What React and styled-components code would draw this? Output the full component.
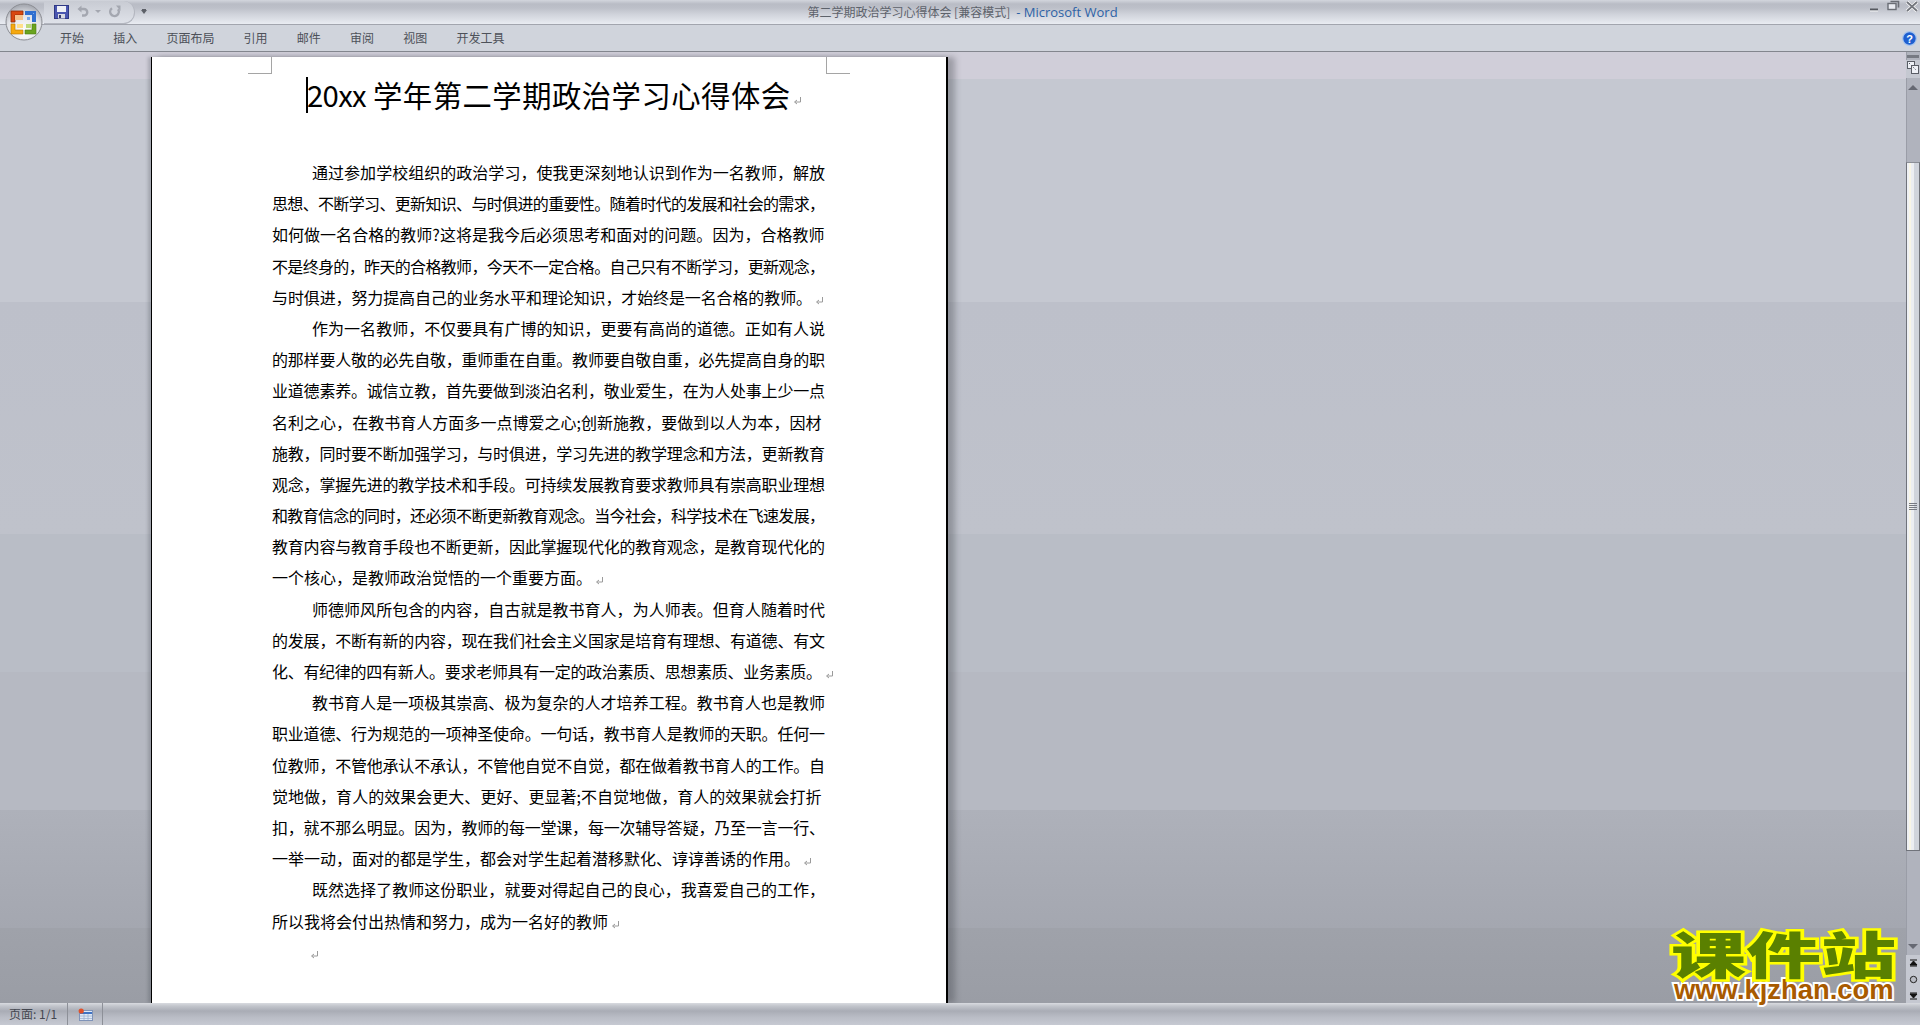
import React from "react";
import styled, { createGlobalStyle } from "styled-components";

const TABS = ["开始", "插入", "页面布局", "引用", "邮件", "审阅", "视图", "开发工具"];

// w is the width the line is squeezed or stretched to in the page, no w means natural width
const PARAGRAPHS = [
  [
    { t: "通过参加学校组织的政治学习，使我更深刻地认识到作为一名教师，解放", w: 513 },
    { t: "思想、不断学习、更新知识、与时俱进的重要性。随着时代的发展和社会的需求，", w: 553 },
    { t: "如何做一名合格的教师?这将是我今后必须思考和面对的问题。因为，合格教师", w: 553 },
    { t: "不是终身的，昨天的合格教师，今天不一定合格。自己只有不断学习，更新观念，", w: 553 },
    { t: "与时俱进，努力提高自己的业务水平和理论知识，才始终是一名合格的教师。", w: 540, end: true },
  ],
  [
    { t: "作为一名教师，不仅要具有广博的知识，更要有高尚的道德。正如有人说", w: 513 },
    { t: "的那样要人敬的必先自敬，重师重在自重。教师要自敬自重，必先提高自身的职", w: 553 },
    { t: "业道德素养。诚信立教，首先要做到淡泊名利，敬业爱生，在为人处事上少一点", w: 553 },
    { t: "名利之心，在教书育人方面多一点博爱之心;创新施教，要做到以人为本，因材", w: 553 },
    { t: "施教，同时要不断加强学习，与时俱进，学习先进的教学理念和方法，更新教育", w: 553 },
    { t: "观念，掌握先进的教学技术和手段。可持续发展教育要求教师具有崇高职业理想", w: 553 },
    { t: "和教育信念的同时，还必须不断更新教育观念。当今社会，科学技术在飞速发展，", w: 553 },
    { t: "教育内容与教育手段也不断更新，因此掌握现代化的教育观念，是教育现代化的", w: 553 },
    { t: "一个核心，是教师政治觉悟的一个重要方面。", end: true },
  ],
  [
    { t: "师德师风所包含的内容，自古就是教书育人，为人师表。但育人随着时代", w: 513 },
    { t: "的发展，不断有新的内容，现在我们社会主义国家是培育有理想、有道德、有文", w: 553 },
    { t: "化、有纪律的四有新人。要求老师具有一定的政治素质、思想素质、业务素质。", w: 550, end: true },
  ],
  [
    { t: "教书育人是一项极其崇高、极为复杂的人才培养工程。教书育人也是教师", w: 513 },
    { t: "职业道德、行为规范的一项神圣使命。一句话，教书育人是教师的天职。任何一", w: 553 },
    { t: "位教师，不管他承认不承认，不管他自觉不自觉，都在做着教书育人的工作。自", w: 553 },
    { t: "觉地做，育人的效果会更大、更好、更显著;不自觉地做，育人的效果就会打折", w: 553 },
    { t: "扣，就不那么明显。因为，教师的每一堂课，每一次辅导答疑，乃至一言一行、", w: 553 },
    { t: "一举一动，面对的都是学生，都会对学生起着潜移默化、谆谆善诱的作用。", end: true },
  ],
  [
    { t: "既然选择了教师这份职业，就要对得起自己的良心，我喜爱自己的工作，", w: 513 },
    { t: "所以我将会付出热情和努力，成为一名好的教师", end: true },
  ],
];

function spacing(line) {
  if (!line.w) return 0;
  const chars = [...line.t];
  const units = chars.reduce((sum, c) => sum + (c.charCodeAt(0) < 128 ? 0.5 : 1), 0);
  return (line.w - units * 16) / (chars.length - 1);
}

function ParaMark() {
  return (
    <MarkSvg viewBox="0 0 9 9" width="9" height="9">
      <path d="M7.5 1v5H2M4 4 1.5 6 4 8" fill="none" stroke="#9a9a9a" strokeWidth="1" />
    </MarkSvg>
  );
}

function OfficeOrb() {
  return (
    <OrbBox>
      <svg viewBox="0 0 38 38" width="38" height="38">
        <defs>
          <radialGradient id="orbFill" cx="50%" cy="75%" r="70%">
            <stop offset="0" stopColor="#ffffff" />
            <stop offset="0.7" stopColor="#dfe1e6" />
            <stop offset="1" stopColor="#a9acb4" />
          </radialGradient>
        </defs>
        <circle cx="19" cy="19" r="18" fill="url(#orbFill)" stroke="#8b8d93" />
        <path d="M6 19V8h12v4h-8v7z" fill="#d9480f" stroke="#8f2c05" strokeWidth="0.8" />
        <path d="M10 12h8v5h-8z" fill="#f6c28a" />
        <path d="M20 8h11v11h-4v-7h-7z" fill="#2f6fd0" />
        <path d="M22 14h3v3h-3zM28 10h1v1h-1z" fill="#77a8ec" />
        <path d="M6 21h4v6h8v4H6z" fill="#f6a90f" stroke="#b97a05" strokeWidth="0.6" />
        <path d="M12 21h6v4h-6z" fill="#ffe08a" />
        <path d="M20 27h7v-6h4v10H20z" fill="#6aa41f" stroke="#4b7a12" strokeWidth="0.6" />
        <path d="M21 21h5v4h-5z" fill="#bcd97a" />
      </svg>
    </OrbBox>
  );
}

function SaveIcon() {
  return (
    <svg viewBox="0 0 15 14" width="15" height="14">
      <rect x="0.5" y="0.5" width="14" height="13" fill="#4a56b0" stroke="#2f3884" />
      <rect x="3" y="1" width="9" height="6" fill="#eef0f6" />
      <rect x="4" y="9" width="7" height="4.5" fill="#d8dae2" />
      <rect x="5" y="10" width="2" height="3" fill="#333a70" />
    </svg>
  );
}

function UndoIcon() {
  return (
    <svg viewBox="0 0 12 13" width="12" height="13">
      <path d="M2 4h5a3.2 3.2 0 0 1 0 6.5H5" fill="none" stroke="#a4a7b0" strokeWidth="2.4" />
      <path d="M4.5 0.5v7L0.5 4z" fill="#a4a7b0" />
    </svg>
  );
}

function RedoIcon() {
  return (
    <svg viewBox="0 0 12 13" width="12" height="13">
      <path d="M3 3.2a4.3 4.3 0 1 0 6 1" fill="none" stroke="#a4a7b0" strokeWidth="2.4" />
      <path d="M7 0.5h4.5V6z" fill="#a4a7b0" />
    </svg>
  );
}

function WindowButtons() {
  return (
    <WindowRow>
      <svg viewBox="0 0 14 14" width="14" height="14">
        <path d="M1 9.5h8" stroke="#55585f" strokeWidth="2" />
        <path d="M1 11h8" stroke="#fff" strokeWidth="0.8" />
      </svg>
      <svg viewBox="0 0 14 14" width="14" height="14">
        <path d="M3.5 1.5h8v6" fill="none" stroke="#6a6d75" strokeWidth="1.6" />
        <rect x="1" y="3.5" width="8" height="6" fill="#e8eaf0" stroke="#6a6d75" strokeWidth="1.4" />
      </svg>
      <svg viewBox="0 0 14 14" width="14" height="14">
        <path d="M2 2l10 9M12 2 2 11" stroke="#fff" strokeWidth="3.2" />
        <path d="M2 2l10 9M12 2 2 11" stroke="#73767d" strokeWidth="1.8" />
      </svg>
    </WindowRow>
  );
}

function HelpIcon() {
  return (
    <svg viewBox="0 0 15 15" width="15" height="15">
      <circle cx="7.5" cy="7.5" r="6.8" fill="#1f5fd0" stroke="#a6c4ee" strokeWidth="1.2" />
      <HelpMark x="7.5" y="11.5" textAnchor="middle">?</HelpMark>
    </svg>
  );
}

function SplitIcon() {
  return (
    <svg viewBox="0 0 12 13" width="12" height="13">
      <rect x="0.5" y="0.5" width="7" height="7" fill="#eef0f6" stroke="#5a5d66" />
      <rect x="4.5" y="4.5" width="7" height="8" fill="#eef0f6" stroke="#5a5d66" />
      <path d="M2 2l7 7" stroke="#5a5d66" strokeDasharray="1.5 1.5" />
    </svg>
  );
}

function TableIcon() {
  return (
    <svg viewBox="0 0 15 13" width="15" height="13">
      <rect x="1.5" y="2.5" width="13" height="10" fill="#dfe9f7" stroke="#7f93b8" />
      <path d="M2 5h12" stroke="#3f73c4" strokeWidth="2" />
      <path d="M2 8h12M2 10.5h12M6 6v6M10 6v6" stroke="#9fb2d0" strokeWidth="0.8" />
      <circle cx="3.2" cy="3" r="2.6" fill="#e0502a" />
    </svg>
  );
}

function App() {
  return (
    <Shell>
      <GlobalStyle />
      <OfficeOrb />
      <TitleBar>
        <QuickGroup>
          <QuickAccess>
            <SaveIcon />
            <UndoIcon />
            <QuickCaret />
            <RedoIcon />
          </QuickAccess>
          <QuickMore />
        </QuickGroup>
        <DocTitle>
          第二学期政治学习心得体会 [兼容模式]
          <AppName>- Microsoft Word</AppName>
        </DocTitle>
        <WindowButtons />
      </TitleBar>
      <TabBar>
        <TabRow>
          {TABS.map((tab) => (
            <Tab key={tab}>{tab}</Tab>
          ))}
        </TabRow>
        <HelpIcon />
      </TabBar>
      <Workspace>
        <Canvas>
          <Page>
            <CropMark $side="left" />
            <CropMark $side="right" />
            <DocHeading>
              <Caret />
              <HeadingLatin>20xx</HeadingLatin>
              <HeadingText>学年第二学期政治学习心得体会</HeadingText>
              <ParaMark />
            </DocHeading>
            {PARAGRAPHS.map((lines, i) => (
              <Paragraph key={i}>
                {lines.map((line, j) => (
                  <Line key={j} $first={j === 0} $spacing={spacing(line)}>
                    {line.t}
                    {line.end && <ParaMark />}
                  </Line>
                ))}
              </Paragraph>
            ))}
            <EmptyLine $first $spacing={0}>
              <ParaMark />
            </EmptyLine>
          </Page>
        </Canvas>
        <Scrollbar>
          <SplitBar />
          <SplitButton>
            <SplitIcon />
          </SplitButton>
          <ArrowButton>
            <ArrowUp />
          </ArrowButton>
          <Thumb>
            <ThumbGrip />
          </Thumb>
          <Track />
          <ArrowButton>
            <ArrowDown />
          </ArrowButton>
          <BrowseGroup>
            <BrowseGlyph>
              <svg viewBox="0 0 9 9" width="9" height="9">
                <path d="M1 1h7M4.5 2 8 6H1zM1 7h7" stroke="#111" fill="#111" />
              </svg>
            </BrowseGlyph>
            <BrowseGlyph>
              <svg viewBox="0 0 9 9" width="9" height="9">
                <circle cx="4.5" cy="4.5" r="3.2" fill="#b9bcc5" stroke="#222" />
              </svg>
            </BrowseGlyph>
            <BrowseGlyph>
              <svg viewBox="0 0 9 9" width="9" height="9">
                <path d="M1 2h7M4.5 7 8 3H1zM1 8h7" stroke="#111" fill="#111" />
              </svg>
            </BrowseGlyph>
          </BrowseGroup>
        </Scrollbar>
      </Workspace>
      <StatusBar>
        <PageCount>页面: 1/1</PageCount>
        <StatusIcon>
          <TableIcon />
        </StatusIcon>
      </StatusBar>
      <Watermark>
        <WatermarkName>课件站</WatermarkName>
        <WatermarkUrl>www.kjzhan.com</WatermarkUrl>
      </Watermark>
    </Shell>
  );
}

export default App;

const GlobalStyle = createGlobalStyle`
  html, body {
    margin: 0;
    height: 100%;
    overflow: hidden;
    background: #c5c8d1;
  }
  #root {
    height: 100%;
  }
`;

const Shell = styled.div`
  position: relative;
  display: flex;
  flex-direction: column;
  height: 1025px;
  overflow: hidden;
  font-family: "Noto Sans CJK SC", "Liberation Sans", sans-serif;
`;

const OrbBox = styled.div`
  position: absolute;
  left: 5px;
  top: 3px;
  width: 38px;
  height: 38px;
  z-index: 3;
`;

const TitleBar = styled.div`
  display: grid;
  grid-template-columns: 1fr auto 1fr;
  align-items: center;
  height: 25px;
  box-sizing: border-box;
  border-bottom: 1px solid #a2a5ae;
  background: linear-gradient(#d3d6dd 0, #b9bcc5 4px, #bdc0c9 8px, #cfd2da 14px, #e9ecf2 24px);
`;

const QuickGroup = styled.div`
  display: flex;
  align-items: center;
  height: 24px;
`;

const QuickAccess = styled.div`
  display: flex;
  align-items: center;
  gap: 8px;
  width: 91px;
  height: 23px;
  box-sizing: border-box;
  margin-left: 44px;
  padding-left: 10px;
  border: 1px solid #b3b6bf;
  border-width: 0 1px 1px 0;
  border-radius: 0 12px 12px 0;
  background: linear-gradient(#c8cbd3, #dfe2e9);
`;

const QuickCaret = styled.div`
  width: 0;
  height: 0;
  margin: 0 0 0 -2px;
  border: 3px solid transparent;
  border-top: 3px solid #a4a7b0;
  border-bottom: 0;
`;

const QuickMore = styled.div`
  width: 0;
  height: 0;
  margin-left: 6px;
  border: 3px solid transparent;
  border-top: 4px solid #5d6068;
  border-bottom: 0;
  box-shadow: 0 -2px 0 -1px #5d6068;
`;

const DocTitle = styled.div`
  padding-left: 5px;
  font-size: 12px;
  line-height: 24px;
  color: #5d626b;
  white-space: nowrap;
`;

const AppName = styled.span`
  margin-left: 6px;
  font-family: "Open Sans", "Liberation Sans", sans-serif;
  font-size: 13px;
  color: #2d62a6;
`;

const WindowRow = styled.div`
  display: flex;
  justify-content: flex-end;
  align-items: flex-start;
  gap: 4px;
  height: 24px;
  padding-right: 1px;
`;

const TabBar = styled.div`
  display: flex;
  align-items: center;
  justify-content: space-between;
  height: 27px;
  box-sizing: border-box;
  padding: 0 3px 0 60px;
  border-bottom: 1px solid #83868e;
  background: #d0d4dc;
`;

const TabRow = styled.div`
  display: flex;
  gap: 29.2px;
`;

const Tab = styled.div`
  font-size: 12px;
  line-height: 26px;
  color: #4d5159;
`;

const HelpMark = styled.text`
  font-family: "Liberation Sans", sans-serif;
  font-size: 11px;
  font-weight: 700;
  fill: #fff;
`;

const Workspace = styled.div`
  display: flex;
  flex: 1;
  min-height: 0;
`;

const Canvas = styled.div`
  display: flex;
  flex: 1;
  box-sizing: border-box;
  padding: 5px 0 0 151px;
  overflow: hidden;
  background: linear-gradient(
    #d0ced9 0 27px,
    #c5c8d1 27px 250px,
    #bdc0ca 250px,
    #bfc2cb 482px,
    #b9bdc6 482px 620px,
    #b6b9c2 620px 758px,
    #aeb1ba 758px,
    #a4a7b0 876px,
    #9fa2aa 876px,
    #9a9da5 951px
  );
`;

const Page = styled.div`
  position: relative;
  width: 797px;
  box-sizing: border-box;
  border-left: 1px solid #000;
  border-right: 2px solid #000;
  background: #fff;
  color: #000;
  box-shadow: 7px 0 6px rgba(60, 62, 70, 0.35), -3px 0 3px rgba(60, 62, 70, 0.25);
`;

const CropMark = styled.div`
  position: absolute;
  top: 0;
  left: ${(p) => (p.$side === "left" ? "96px" : "674px")};
  width: 23px;
  height: 16px;
  border-bottom: 1px solid #a5a5a5;
  border-${(p) => (p.$side === "left" ? "right" : "left")}: 1px solid #a5a5a5;
`;

const DocHeading = styled.div`
  display: flex;
  align-items: center;
  height: 36px;
  box-sizing: border-box;
  margin: 20px 0 44px;
  padding: 0 0 3px 154px;
  font-size: 29.33px;
  white-space: nowrap;

  svg {
    margin: 14px 0 0 2px;
  }
`;

const Caret = styled.span`
  align-self: flex-start;
  width: 2px;
  height: 36px;
  margin-right: -1px;
  background: #000;
`;

const HeadingLatin = styled.span`
  width: 66px;
  flex: none;
  letter-spacing: -0.7px;
`;

const HeadingText = styled.span`
  letter-spacing: 0.5px;
`;

const Paragraph = styled.div``;

const Line = styled.div`
  height: 31.2px;
  padding-left: ${(p) => (p.$first ? "160px" : "120px")};
  font-size: 16px;
  line-height: 31.2px;
  letter-spacing: ${(p) => p.$spacing.toFixed(3)}px;
  white-space: nowrap;
`;

const EmptyLine = styled(Line)`
  margin: -1px 0 0 -5px;
`;

const MarkSvg = styled.svg`
  flex: none;
  margin-left: 3px;
  vertical-align: -1px;
`;

const Scrollbar = styled.div`
  display: flex;
  flex-direction: column;
  width: 14px;
  margin-left: -1px;
  background: #b0b3bd;
  box-shadow: inset 1px 0 0 #9a9da7;
`;

const SplitBar = styled.div`
  height: 3px;
  margin: 3px 1px 2px;
  background: #777a83;
`;

const SplitButton = styled.div`
  display: flex;
  justify-content: center;
  height: 18px;
  padding-top: 1px;
  box-sizing: border-box;
  background: #c5c8d1;
`;

const ArrowButton = styled.div`
  display: flex;
  align-items: center;
  justify-content: center;
  height: 18px;
  flex: none;
`;

const ArrowUp = styled.div`
  border: 5px solid transparent;
  border-top: 0;
  border-bottom: 5px solid #666973;
`;

const ArrowDown = styled.div`
  border: 5px solid transparent;
  border-bottom: 0;
  border-top: 5px solid #666973;
`;

const Thumb = styled.div`
  display: flex;
  align-items: center;
  justify-content: center;
  height: 689px;
  margin-top: 66px;
  box-sizing: border-box;
  border: 1px solid #70737b;
  border-top-color: #8b8e96;
  background: linear-gradient(90deg, #eef0f4 0 2px, #f8f5e6 2px 4px, #eceef2 4px 7px, #d0d4dc 7px);
`;

const ThumbGrip = styled.div`
  width: 8px;
  height: 7px;
  background: repeating-linear-gradient(#777a83 0 1px, transparent 1px 2px);
`;

const Track = styled.div`
  flex: 1;
`;

const BrowseGroup = styled.div`
  display: flex;
  flex-direction: column;
  height: 48px;
  background: #c5c8d1;
`;

const BrowseGlyph = styled.div`
  display: flex;
  flex: 1;
  align-items: center;
  justify-content: center;
`;

const StatusBar = styled.div`
  display: flex;
  height: 22px;
  flex: none;
  background: linear-gradient(#d9dbe0 0, #c2c5cc 3px, #a9acb5 8px, #b9bcc5 14px, #c6c9d2 22px);
`;

const PageCount = styled.div`
  width: 58px;
  padding-left: 9px;
  font-size: 12px;
  line-height: 22px;
  color: #444750;
  border-right: 1px solid #8d9098;
`;

const StatusIcon = styled.div`
  display: flex;
  align-items: center;
  justify-content: center;
  width: 34px;
  border-right: 1px solid #8d9098;
`;

const Watermark = styled.div`
  position: absolute;
  left: 1671px;
  top: 926px;
  font-weight: 900;
  white-space: nowrap;
`;

const WatermarkName = styled.div`
  width: 150px;
  height: 52px;
  font-size: 50px;
  line-height: 52px;
  color: #5a8000;
  transform: scaleX(1.5);
  transform-origin: left center;
  -webkit-text-stroke: 5px #ffff00;
  paint-order: stroke fill;
`;

const WatermarkUrl = styled.div`
  margin: 1px 0 0 3px;
  font-family: "Liberation Sans", sans-serif;
  font-size: 27.4px;
  font-weight: 700;
  line-height: 22px;
  color: #a85a00;
  -webkit-text-stroke: 4px #ffffff;
  paint-order: stroke fill;
`;
